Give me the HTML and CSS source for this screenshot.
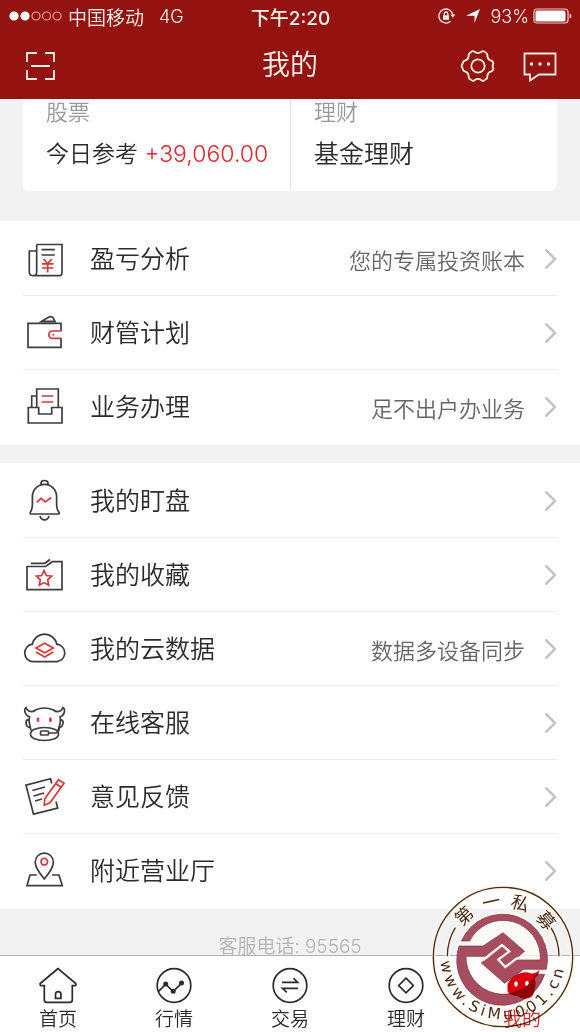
FILE: index.html
```
<!DOCTYPE html>
<html lang="zh-CN">
<head>
    <meta charset="utf-8">
    <meta name="viewport" content="width=device-width, initial-scale=1.0"/>
    <meta name="format-detection" content="telephone=no">
    <title>我的</title>
    <link rel="stylesheet" href="styles.css">
</head>
<body>
<header class="header">
    <div class="status">
        <div class="status-left">
            <svg class="signal" width="54" height="12" viewBox="0 0 54 12">
                <circle cx="5" cy="6" r="4" class="on"/>
                <circle cx="16" cy="6" r="4" class="on"/>
                <circle cx="27" cy="6" r="4"/>
                <circle cx="37.500" cy="6" r="4"/>
                <circle cx="48" cy="6" r="4"/>
            </svg>
            <span>中国移动</span>
            <span class="network">4G</span>
        </div>
        <div class="status-time">下午2:20</div>
        <div class="status-right">
            <svg width="18" height="16" viewBox="0 0 18 16" fill="none" stroke="#fdeee4" stroke-width="1.3">
                <path d="M12.500 13.300A7 7 0 1 1 14.800 7"/>
                <path d="M12.300 6.500h5l-2.500 3.300z" fill="#fdeee4" stroke="none"/>
                <path d="M5 7.300h6v4.500h-6z" fill="#fdeee4" stroke="none"/>
                <path d="M6.200 7.500V5.800a1.800 1.800 0 0 1 3.600 0v1.700"/>
            </svg>
            <svg width="14" height="16" viewBox="0 0 14 16"><path d="M14 1L8.500 15V7.800H0z" fill="#fff"/></svg>
            <span class="battery">
                <span>93%</span>
                <svg width="39" height="16" viewBox="0 0 39 16">
                    <rect x="1" y="1" width="34" height="14" rx="3" fill="none" stroke="#f3c9bf" stroke-width="1.200"/>
                    <rect x="2.500" y="2.500" width="30" height="11" rx="1.500" fill="#fff"/>
                    <path d="M36.500 5.500q2 .5 2 2.500t-2 2.500z" fill="#f3c9bf"/>
                </svg>
            </span>
        </div>
    </div>
    <div class="nav">
        <button class="nav-btn" aria-label="扫一扫">
            <svg width="34" height="34" viewBox="0 0 34 34">
                <path d="M5 13V4h10M23 4h9v9M32 21v9h-9M15 30H5v-9M9 17h19"/>
            </svg>
        </button>
        <h1 class="nav-title">我的</h1>
        <div class="nav-right">
            <button class="nav-btn" aria-label="设置">
                <svg width="36" height="34" viewBox="0 0 36 34">
                    <path d="M10.500 3.500Q12.500 1.200 14.500 2.800Q18 5.300 21.500 2.800Q23.500 1.200 25.500 3.500Q27.800 4.600 27.300 6.800Q27.600 10.300 30.500 11.300Q33 11.800 33.400 14.600Q31.800 17 33.400 19.400Q33 22.200 30.500 22.700Q27.600 23.700 27.300 27.200Q27.800 29.400 25.500 30.500Q23.500 32.800 21.500 31.200Q18 28.700 14.500 31.200Q12.500 32.800 10.500 30.500Q8.200 29.400 8.700 27.200Q8.400 23.700 5.500 22.700Q3 22.200 2.600 19.400Q.8 17 2.600 14.600Q3 11.800 5.500 11.300Q8.400 10.300 8.700 6.800Q8.200 4.600 10.500 3.500Z" class="gear"/>
                    <circle cx="18" cy="17" r="6.700"/>
                </svg>
            </button>
            <button class="nav-btn" aria-label="消息">
                <svg width="36" height="34" viewBox="0 0 36 34">
                    <path d="M2.500 4.500h31v21H17l-9 6v-6H2.500z"/>
                    <path d="M8 15h3M16.500 15h3M25 15h3" stroke-width="3"/>
                </svg>
            </button>
        </div>
    </div>
</header>

<main class="content">
    <section class="card">
        <div class="card-item">
            <p class="card-name">股票</p>
            <p class="card-today">今日参考 <span class="up">+39,060.00</span></p>
        </div>
        <div class="card-item">
            <p class="card-name">理财</p>
            <p class="card-value">基金理财</p>
        </div>
    </section>

    <nav class="group">
        <a class="row" href="#">
            <svg class="icon" viewBox="0 0 44 44">
                <path d="M13.700 7.500H39V36q0 2.700-2.700 2.700H10Q6.300 38.700 6.300 34.500V14h7.400M13.700 7.500V35q0 3.700-3.700 3.700M18.500 12.700h13.300M18.500 18h13.300"/>
                <path class="red" d="M20.500 22l4.200 4.500 4.200-4.500M19 26.800h11.500M19 31h11.500M24.700 26v9.500"/>
            </svg>
            <span class="label">盈亏分析</span>
            <span class="desc">您的专属投资账本</span>
            <svg class="arrow" viewBox="0 0 13 22"><path d="M1.500 1.500L11 11l-9.500 9.500"/></svg>
        </a>
        <a class="row" href="#">
            <svg class="icon" viewBox="0 0 44 44">
                <path d="M38 20v-7.700H5v24h33v-9M18.700 10.300L26 6q2.500-1.300 4 .8L32 10.300z"/>
                <path class="red" d="M38.800 20h-9.300a3.700 3.700 0 0 0 0 7.400h9.300"/>
                <circle cx="30.300" cy="23.700" r="1" fill="#d9363c" stroke="none"/>
            </svg>
            <span class="label">财管计划</span>
            <svg class="arrow" viewBox="0 0 13 22"><path d="M1.500 1.500L11 11l-9.500 9.500"/></svg>
        </a>
        <a class="row" href="#">
            <svg class="icon" viewBox="0 0 44 44">
                <path d="M5.300 22.500h10.400V29h13v-6.500H39V38H5.300zM13.700 22.500V4h21.600v18.500M8.700 22.500V11h5"/>
                <path class="red" d="M18.700 11h11.600M18.700 17h11.600"/>
            </svg>
            <span class="label">业务办理</span>
            <span class="desc">足不出户办业务</span>
            <svg class="arrow" viewBox="0 0 13 22"><path d="M1.500 1.500L11 11l-9.500 9.500"/></svg>
        </a>
    </nav>

    <nav class="group">
        <a class="row" href="#">
            <svg class="icon" viewBox="0 0 44 44">
                <path d="M7.700 35q-1-.5-.3-2 2-2.500 2-8v-7.500a12 12 0 0 1 24.200 0V25q0 5.500 2.300 8 .9 1.500-.2 2zM18 5.500V4a3.500 2.500 0 0 1 7 0v1.500M17 37q1 3.800 4.500 3.800T26 37"/>
                <path class="red" d="M13.700 23.300l4.300-4 4.300 3.700 6-4.500"/>
            </svg>
            <span class="label">我的盯盘</span>
            <svg class="arrow" viewBox="0 0 13 22"><path d="M1.500 1.500L11 11l-9.500 9.500"/></svg>
        </a>
        <a class="row" href="#">
            <svg class="icon" viewBox="0 0 44 44">
                <path d="M4 13.500h18.700l6.600-4.800H39v28H4zM7.700 10.300H22l5-3.800"/>
                <path class="red" d="M21 17.600l2.300 4.900 5.300.7-3.900 3.700 1 5.300-4.700-2.600-4.700 2.600 1-5.300-3.900-3.700 5.300-.7z"/>
            </svg>
            <span class="label">我的收藏</span>
            <svg class="arrow" viewBox="0 0 13 22"><path d="M1.500 1.500L11 11l-9.500 9.500"/></svg>
        </a>
        <a class="row" href="#">
            <svg class="icon" viewBox="0 0 44 44">
                <path d="M10 34.700a8.800 8.800 0 0 1-.7-17.500 12.500 12.500 0 0 1 24.500 0A8.800 8.800 0 0 1 34 34.700z"/>
                <path class="red" d="M13 21l8.700-4.700L30.300 21l-8.600 4.700zM13 25l8.700 5 8.600-5"/>
            </svg>
            <span class="label">我的云数据</span>
            <span class="desc">数据多设备同步</span>
            <svg class="arrow" viewBox="0 0 13 22"><path d="M1.500 1.500L11 11l-9.500 9.500"/></svg>
        </a>
        <a class="row" href="#">
            <svg class="icon" viewBox="0 0 44 44">
                <path d="M8 29.500L6.500 23Q5.500 19 6.500 16 1.500 13.500 1.700 9q.2-2 1.300-2.500 1 3.500 5.500 4.200 2 0 4-1.700 8.500-4 18 0 2 1.700 4 1.700 4.500-.7 5.500-4.200 1.300.5 1.500 2.500.5 4.500-4.500 7 1 3 0 7L35 29.500M5.500 18.500q-3 .5-2.500 4 .5 3.500 3.500 4M37.500 18.500q3 .5 2.500 4-.5 3.500-3.500 4"/>
                <path d="M21.500 26.500c8 0 14 2.500 14 6.500s-6 6.500-14 6.500-14-2.500-14-6.500 6-6.500 14-6.500z"/>
                <rect x="17.500" y="30" width="8" height="4" rx="1"/>
                <path d="M25.500 32h7q3 0 4-5"/>
                <path class="red eye" d="M15 16.800v4M28 16.800q-1.500 2 0 4"/>
            </svg>
            <span class="label">在线客服</span>
            <svg class="arrow" viewBox="0 0 13 22"><path d="M1.500 1.500L11 11l-9.500 9.500"/></svg>
        </a>
        <a class="row" href="#">
            <svg class="icon" viewBox="0 0 44 44">
                <path d="M28.700 8.500l-1.200-4.700L3 10.200l7.500 29 24.200-6L33 26.500M9.300 15.500L22 12M10.500 21l10.500-3M12 26l7-2"/>
                <path class="red" d="M35.500 4.700l5.500 3.500-14 19.600-5.700 2.400.4-6.400zM32.700 8.500l5.500 3.700"/>
            </svg>
            <span class="label">意见反馈</span>
            <svg class="arrow" viewBox="0 0 13 22"><path d="M1.500 1.500L11 11l-9.500 9.500"/></svg>
        </a>
        <a class="row" href="#">
            <svg class="icon" viewBox="0 0 44 44">
                <path d="M21.300 30Q12.200 19 12.200 13.200a9.100 9.100 0 0 1 18.200 0Q30.400 19 21.300 30zM13.700 26H7L4 36.700h35.300L36 26h-7"/>
                <circle class="red" cx="21.300" cy="12.700" r="3.300"/>
            </svg>
            <span class="label">附近营业厅</span>
            <svg class="arrow" viewBox="0 0 13 22"><path d="M1.500 1.500L11 11l-9.500 9.500"/></svg>
        </a>
    </nav>

    <p class="hotline">客服电话: <span class="hotline-num">95565</span></p>
</main>

<nav class="tabbar">
    <a class="tab" href="#">
        <svg class="tab-icon" viewBox="0 0 38 38">
            <path d="M19 2.500L1.200 17.500q-.5 2.200 1.600 2.200h2.500V34q0 2.300 2.300 2.300H31q2.300 0 2.300-2.300V19.700h2q2.300 0 1.500-2.200zM16.500 32.300v-4q0-2.700 2.700-2.700t2.700 2.700v4z"/>
        </svg>
        <span>首页</span>
    </a>
    <a class="tab" href="#">
        <svg class="tab-icon" viewBox="0 0 38 38">
            <circle cx="19" cy="19.500" r="16.800"/>
            <path d="M3.300 25.700l7.400-7.500 7.500 7.300 8.300-8.300"/>
            <g fill="#2b2b2b" stroke="none"><circle cx="10.700" cy="18" r="2.500"/><circle cx="18.200" cy="25.300" r="2.500"/><circle cx="26.500" cy="17" r="2.500"/></g>
        </svg>
        <span>行情</span>
    </a>
    <a class="tab" href="#">
        <svg class="tab-icon" viewBox="0 0 38 38">
            <circle cx="19" cy="19.500" r="16.800"/>
            <path d="M11 16.300h15.500L22.500 12M27 22.300H11.500l4.300 4"/>
        </svg>
        <span>交易</span>
    </a>
    <a class="tab" href="#">
        <svg class="tab-icon" viewBox="0 0 38 38">
            <circle cx="19" cy="19.500" r="16.800"/>
            <path d="M19 12.200l7.300 7.300-7.300 7.300-7.300-7.300z"/>
        </svg>
        <span>理财</span>
    </a>
    <a class="tab active" href="#">
        <svg class="tab-icon" viewBox="0 0 38 38">
            <path d="M4.500 18Q10 8 20 6.500q4-1 8 1 6 0 8.500-4Q36 10 31.500 12q2 5 0 12 0 5-5 8-8 2-12-2-8 0-10-5z" fill="#d8000c" stroke="none"/>
            <ellipse cx="13" cy="18" rx="1.800" ry="2.800" fill="#fff" stroke="none"/>
            <ellipse cx="24" cy="17.500" rx="1.800" ry="2.800" fill="#fff" stroke="none"/>
        </svg>
        <span>我的</span>
    </a>
</nav>

<!-- 角标 -->
<svg class="seal" viewBox="0 0 426 426">
    <defs>
        <path id="arc-top" d="M63 213a150 150 0 0 1 300 0"/>
        <path id="arc-bottom" d="M26 213a187 187 0 0 0 374 0"/>
    </defs>
    <circle cx="213" cy="213" r="209" class="seal-halo"/>
    <circle cx="213" cy="215" r="138" fill="#fffdf8" fill-opacity=".7"/>
    <circle cx="213" cy="213" r="209" class="seal-line"/>
    <path d="M46 211a167 167 0 0 1 24-86M357 125a167 167 0 0 1 24 86" class="seal-halo"/>
    <path d="M46 211a167 167 0 0 1 24-86M357 125a167 167 0 0 1 24 86" class="seal-line"/>
    <g class="seal-mark">
        <path d="M81 180H153L213 140 278 196 222 241 203 221 236 195 210 173 160 211H102A112 112 0 0 0 313 265H338A135 135 0 0 1 81 180Z"/>
        <path d="M88 165A135 135 0 0 1 343 250H275L218 292 148 231 209 181 228 196 196 222 219 246 250 221H325A112 112 0 0 0 113 165Z"/>
    </g>
    <path d="M154 222L210 177 232 196 199 221 220 243 254 217H322" class="seal-gap"/>
    <g class="seal-text">
        <text class="seal-cn"><textPath href="#arc-top" startOffset="122">第</textPath></text>
        <text class="seal-cn"><textPath href="#arc-top" startOffset="204">一</textPath></text>
        <text class="seal-cn"><textPath href="#arc-top" startOffset="282">私</textPath></text>
        <text class="seal-cn"><textPath href="#arc-top" startOffset="365">募</textPath></text>
        <text class="seal-url"><textPath href="#arc-bottom" startOffset="14">www.SiMu001.cn</textPath></text>
    </g>
</svg>
</body>
</html>
```
FILE: styles.css
```
* {
    box-sizing: border-box;
}

body {
    margin: 0;
    height: 100vh;
    display: flex;
    flex-direction: column;
    background: #f2f2f2;
    color: #2b2b2b;
    font-family: "Liberation Sans", "Noto Sans CJK SC", sans-serif;
    font-weight: 350;
    overflow: hidden;
}

h1, p {
    margin: 0;
    font-weight: inherit;
}

a {
    color: inherit;
    text-decoration: none;
}

svg {
    display: block;
    flex: none;
}

/* 顶部 */
.header {
    flex: none;
    background: #941310;
    color: #fff5ee;
}

.status {
    display: grid;
    grid-template-columns: 1fr auto 1fr;
    align-items: center;
    height: 32px;
    padding: 0 8px 0 9px;
    font-size: 19px;
    font-family: Inter, "Noto Sans CJK SC", sans-serif;
}

.status-left, .status-right {
    display: flex;
    align-items: center;
    gap: 5px;
}

.status-right {
    justify-content: flex-end;
    gap: 10px;
}

.battery {
    display: flex;
    align-items: center;
    gap: 4px;
    font-size: 18px;
}

.signal circle {
    fill: none;
    stroke: #f0a08c;
    stroke-width: 1.2;
}

.signal .on {
    fill: #fff;
    stroke: #fff;
}

.network {
    margin-left: 10px;
    font-size: 18px;
}

.status-time {
    font-weight: 500;
}

.nav {
    display: grid;
    grid-template-columns: 1fr auto 1fr;
    align-items: center;
    height: 67px;
    padding: 0 22px;
}

.nav-title {
    font-size: 28px;
    line-height: 40px;
}

.nav-right {
    display: flex;
    justify-content: flex-end;
    gap: 26px;
}

.nav-btn {
    justify-self: start;
    padding: 0;
    border: 0;
    background: none;
    cursor: pointer;
}

.nav-btn svg {
    fill: none;
    stroke: #fff0e4;
    stroke-width: 1.8;
}

.nav-btn .gear {
    stroke-linejoin: round;
}

/* 内容 */
.content {
    flex: 1;
    min-height: 0;
    overflow: hidden;
}

.card {
    display: grid;
    grid-template-columns: 1fr 1fr;
    margin: 0 23px 30px;
    background: #fff;
    border-radius: 0 0 6px 6px;
}

.card-item {
    padding: 0 0 17px 23px;
    white-space: nowrap;
}

.card-item + .card-item {
    border-left: 1px solid #e4e4e4;
}

.card-name {
    font-size: 22px;
    line-height: 28px;
    color: #999;
}

.card-today, .card-value {
    margin-top: 8px;
    font-size: 23px;
    line-height: 39px;
}

.card-value {
    font-size: 25px;
}

.up {
    font-family: Inter, sans-serif;
    font-size: 23px;
    font-weight: 300;
    color: #dc2a2f;
}

.group {
    margin-bottom: 18px;
    padding: 1px 23px;
    background: #fff;
}

.row {
    display: flex;
    align-items: center;
    height: 74px;
    border-bottom: 1px solid #ededed;
}

.row:last-child {
    border-bottom: 0;
}

.icon {
    width: 44px;
    height: 44px;
    margin-right: 23px;
    fill: none;
    stroke: #3d3d3d;
    stroke-width: 1.7;
}

.icon .red {
    stroke: #d9363c;
}

.icon .eye {
    stroke-width: 2.5;
}

.label {
    flex: 1;
    font-size: 25px;
    line-height: 34px;
}

.desc {
    font-size: 22px;
    color: #666;
}

.arrow {
    width: 13px;
    height: 22px;
    margin-left: 19px;
    fill: none;
    stroke: #c4c4c4;
    stroke-width: 2.5;
}

.hotline {
    padding-top: 6px;
    font-size: 19px;
    line-height: 28px;
    text-align: center;
    color: #b4b4b4;
}

.hotline-num {
    font-family: Inter, sans-serif;
    font-size: 19px;
    font-weight: 300;
}

/* 底部 */
.tabbar {
    flex: none;
    display: grid;
    grid-template-columns: repeat(5, 1fr);
    height: 77px;
    padding-top: 10px;
    background: #fff;
    border-top: 1px solid #b2b2b2;
}

.tab {
    display: flex;
    flex-direction: column;
    align-items: center;
    gap: 3px;
    font-size: 19px;
    line-height: 26px;
}

.tab-icon {
    width: 38px;
    height: 38px;
    fill: none;
    stroke: #2b2b2b;
    stroke-width: 1.7;
}

.active {
    position: relative;
    z-index: 2;
    color: #d8292f;
    mix-blend-mode: multiply;
}

.seal {
    position: absolute;
    right: 6px;
    bottom: 4px;
    z-index: 1;
    width: 142px;
    height: 142px;
    pointer-events: none;
}

.seal-line, .seal-halo {
    fill: none;
    stroke: #4a2c20;
    stroke-width: 4;
}

.seal-halo {
    stroke: #fff8e8;
    stroke-width: 12;
}

.seal-mark {
    fill: #a84c60;
    stroke: #7a3040;
    stroke-width: 2;
}

.seal-gap {
    fill: none;
    stroke: #fff8e8;
    stroke-width: 7;
}

.seal-text {
    fill: #4a2c20;
    stroke: #fffaee;
    stroke-width: 6;
    paint-order: stroke;
    font-family: "DejaVu Sans", "Noto Sans CJK SC", sans-serif;
    font-weight: 400;
}

.seal-cn {
    font-size: 54px;
    text-anchor: middle;
}

.seal-url {
    font-size: 46px;
    letter-spacing: 11px;
}
```
